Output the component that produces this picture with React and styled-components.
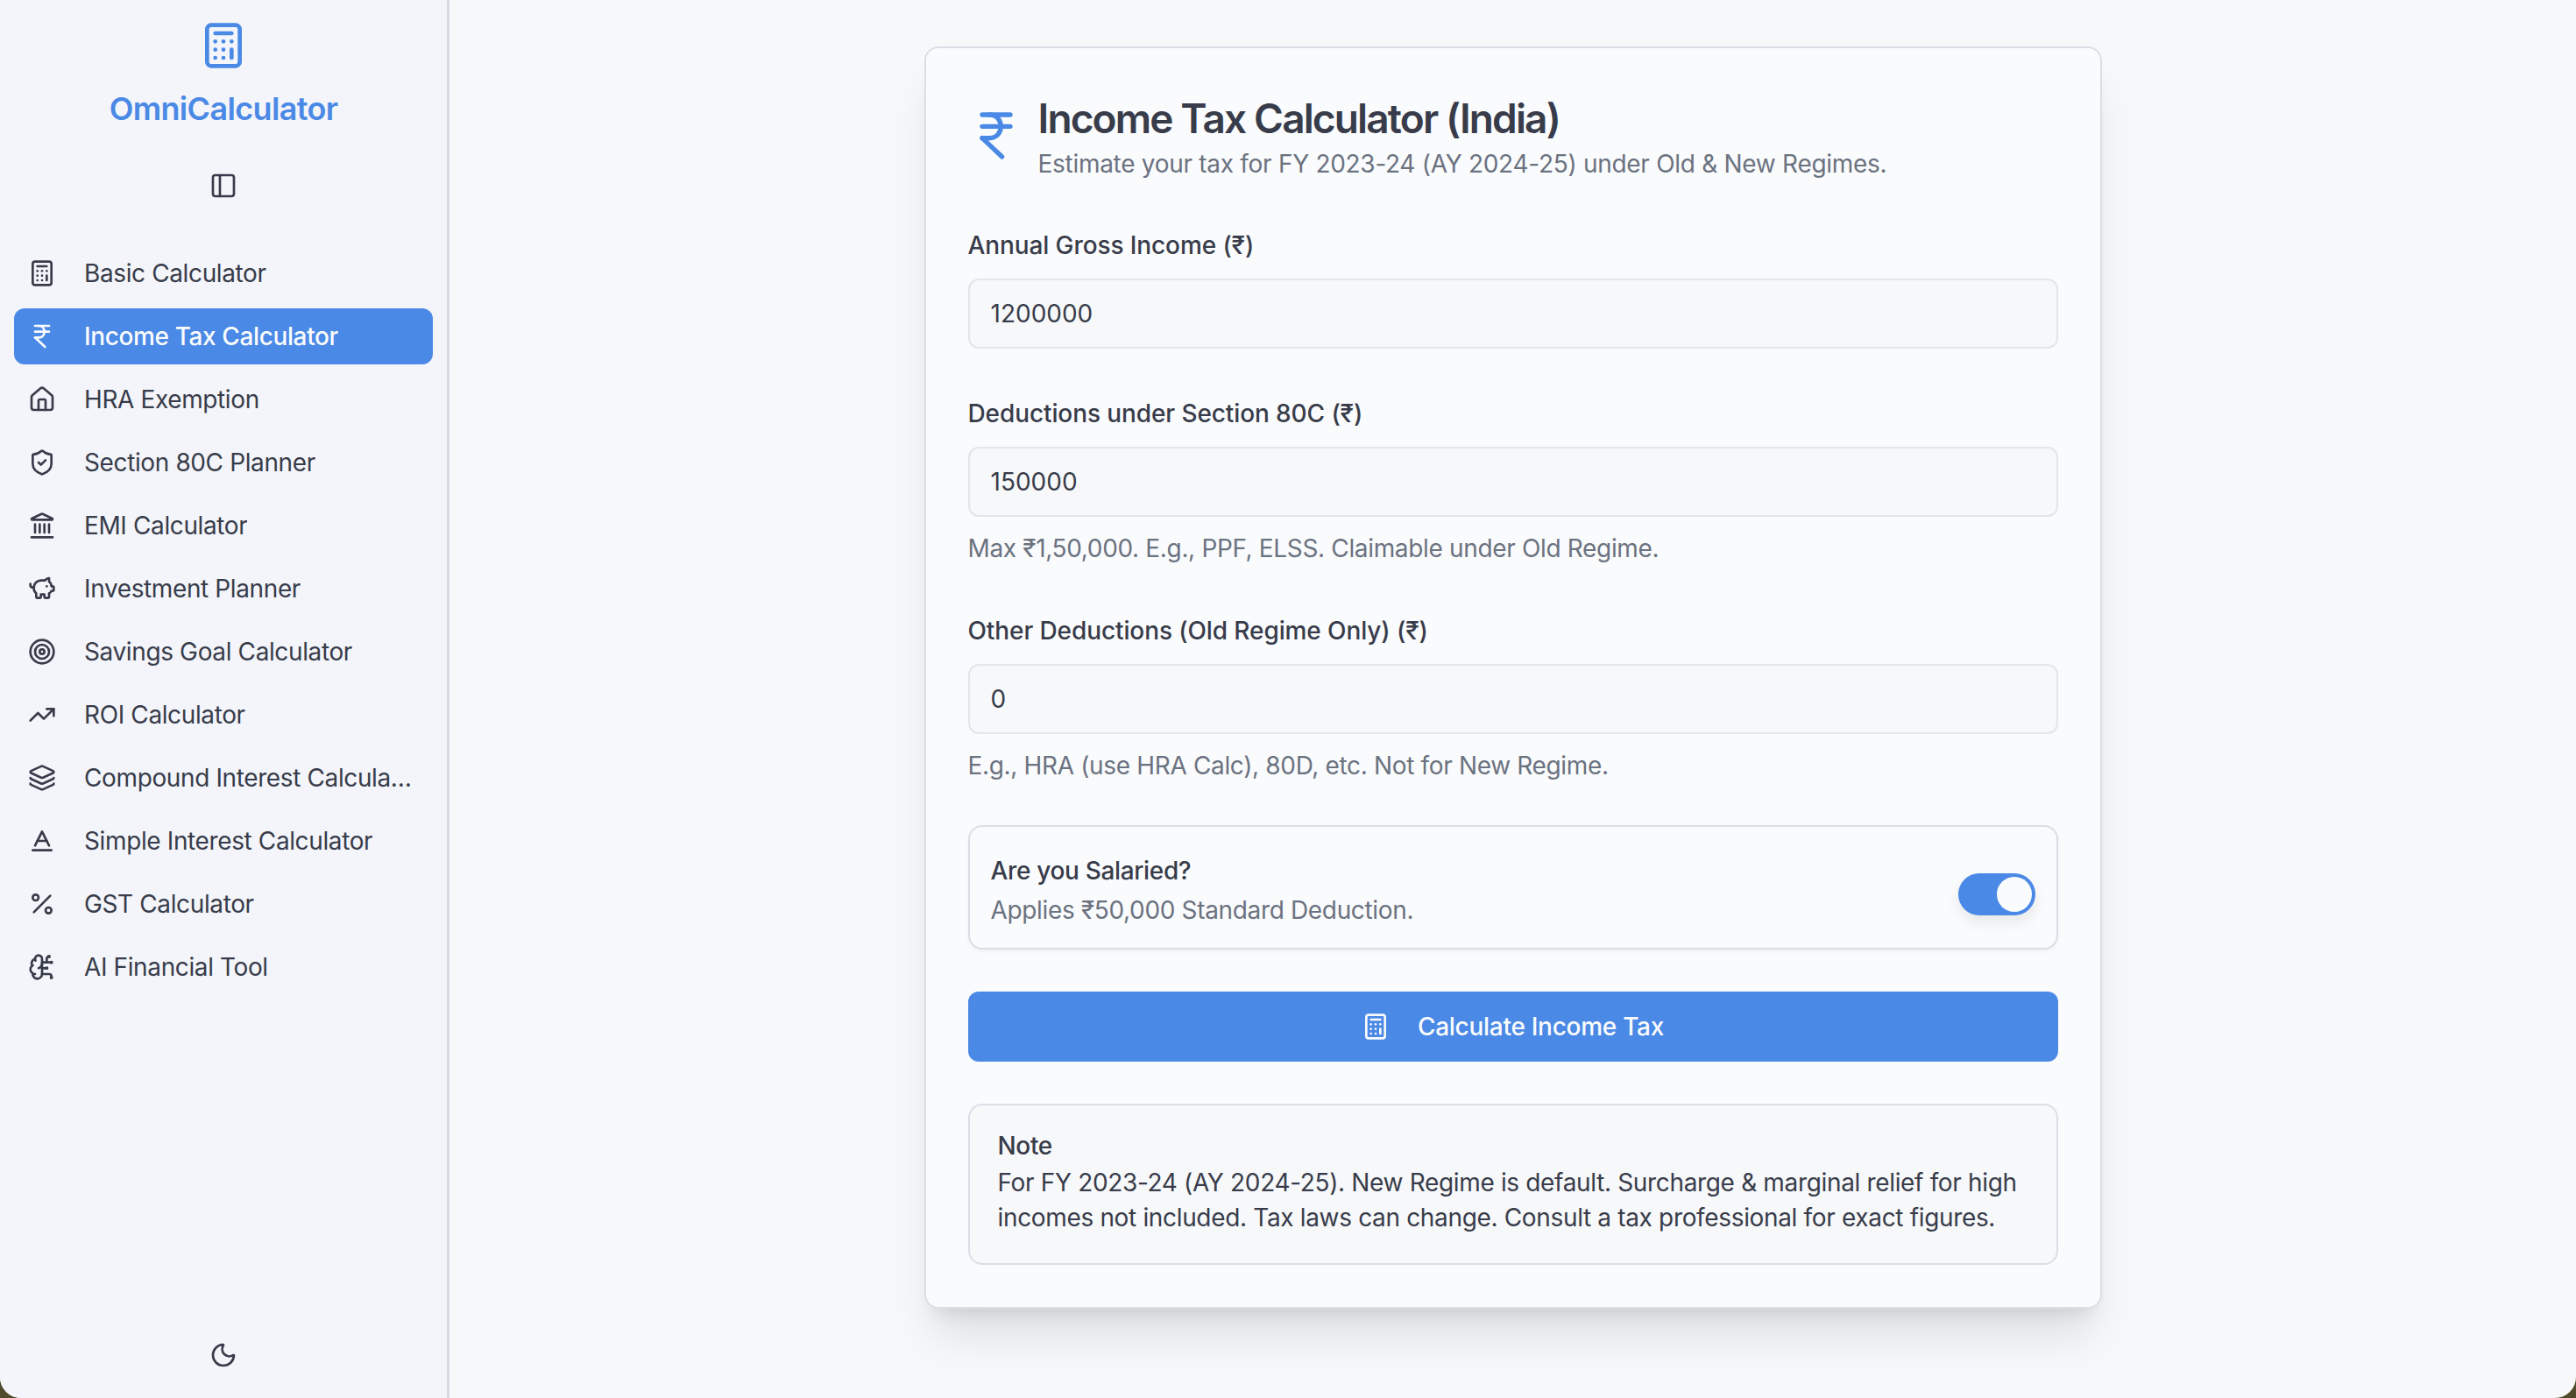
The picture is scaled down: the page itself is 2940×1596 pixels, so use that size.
import React from "react";
import styled, { createGlobalStyle } from "styled-components";
import {
  Baseline,
  BrainCircuit,
  Calculator,
  House,
  IndianRupee,
  Landmark,
  Layers,
  Moon,
  PanelLeft,
  Percent,
  PiggyBank,
  ShieldCheck,
  Target,
  TrendingUp,
} from "lucide-react";

const navItems = [
  { label: "Basic Calculator", icon: Calculator },
  { label: "Income Tax Calculator", icon: IndianRupee, active: true },
  { label: "HRA Exemption", icon: House },
  { label: "Section 80C Planner", icon: ShieldCheck },
  { label: "EMI Calculator", icon: Landmark },
  { label: "Investment Planner", icon: PiggyBank },
  { label: "Savings Goal Calculator", icon: Target },
  { label: "ROI Calculator", icon: TrendingUp },
  { label: "Compound Interest Calculator", icon: Layers },
  { label: "Simple Interest Calculator", icon: Baseline },
  { label: "GST Calculator", icon: Percent },
  { label: "AI Financial Tool", icon: BrainCircuit },
];

const GlobalStyle = createGlobalStyle`
  * {
    box-sizing: border-box;
  }
  body {
    margin: 0;
    background: #4f4a2a;
    font-family: Inter, "Liberation Sans", sans-serif;
    letter-spacing: -0.34px;
    color: #383c4a;
  }
`;

const Page = styled.div`
  display: flex;
  height: 1596px;
  overflow: hidden;
  border-radius: 0 0 24px 24px;
  background: #f7f8fa;
`;

const Sidebar = styled.aside`
  display: flex;
  flex-direction: column;
  flex: 0 0 513px;
  min-width: 0;
  padding: 24px 16px 33px;
  background: #f3f5fa;
  border-right: 3px solid #d9dbe4;
`;

const Brand = styled.div`
  display: flex;
  flex-direction: column;
  align-items: center;
  color: #4a89e5;
`;

const BrandName = styled.h1`
  margin: 20px 0 0;
  font-size: 36px;
  line-height: 48px;
  font-weight: 600;
  letter-spacing: -0.65px;
`;

const IconButton = styled.button`
  display: flex;
  align-self: center;
  padding: 0;
  border: 0;
  background: none;
  color: #383c4a;
`;

const CollapseButton = styled(IconButton)`
  margin: 48px 0 52px;
`;

const Nav = styled.nav`
  display: flex;
  flex-direction: column;
  gap: 8px;
  flex: 1;
  min-width: 0;
`;

const NavItem = styled.a`
  display: flex;
  align-items: center;
  gap: 32px;
  height: 64px;
  padding: 0 16px;
  border-radius: 12px;
  font-size: 28px;
  letter-spacing: -0.38px;
  font-weight: ${(p) => (p.$active ? 500 : 400)};
  background: ${(p) => (p.$active ? "#4a89e5" : "transparent")};
  color: ${(p) => (p.$active ? "#fafbfd" : "#383c4a")};

  svg {
    flex: none;
  }
`;

const NavLabel = styled.span`
  min-width: 0;
  overflow: hidden;
  white-space: nowrap;
  text-overflow: ellipsis;
`;

const Main = styled.main`
  flex: 1;
  min-width: 0;
  display: flex;
  justify-content: center;
  align-items: flex-start;
  padding-top: 53px;
`;

const Card = styled.section`
  width: 1344px;
  padding: 48px;
  background: #fafbfd;
  border: 2px solid #dcdee6;
  border-radius: 16px;
  box-shadow: 0 40px 50px -10px rgba(0, 0, 0, 0.1), 0 16px 20px -12px rgba(0, 0, 0, 0.1);
`;

const Header = styled.header`
  display: flex;
  align-items: center;
  gap: 16px;
  margin-bottom: 47px;
  color: #4a89e5;
`;

const Title = styled.h2`
  margin: 0;
  font-size: 46px;
  line-height: 64px;
  font-weight: 600;
  letter-spacing: -1.86px;
  color: #383c4a;
`;

const Subtitle = styled.p`
  margin: 0;
  font-size: 28px;
  line-height: 40px;
  letter-spacing: -0.29px;
  color: #6b7280;
`;

const Form = styled.form`
  display: flex;
  flex-direction: column;
  gap: 48px;
`;

const Field = styled.div`
  display: flex;
  flex-direction: column;
`;

const Label = styled.label`
  margin: 6px 0 18px;
  font-size: 28px;
  line-height: 40px;
  font-weight: 500;
  letter-spacing: -0.1px;
`;

const Input = styled.input`
  width: 100%;
  height: 80px;
  padding: 0 24px;
  background: #f7f8fa;
  border: 2px solid #e3e5eb;
  border-radius: 12px;
  font: inherit;
  font-size: 28px;
  color: #383c4a;
  outline: none;
`;

const Help = styled.p`
  margin: 16px 0 0;
  font-size: 28px;
  line-height: 40px;
  color: #6b7280;
`;

const SalariedBox = styled.div`
  display: flex;
  align-items: center;
  justify-content: space-between;
  height: 142px;
  padding: 0 24px;
  border: 2px solid #dcdee6;
  border-radius: 16px;
  box-shadow: 0 2px 4px rgba(0, 0, 0, 0.05);
`;

const SalariedText = styled.div`
  padding-top: 6px;
`;

const SalariedTitle = styled.div`
  font-size: 28px;
  line-height: 40px;
  font-weight: 500;
`;

const SalariedHint = styled.div`
  margin-top: 5px;
  font-size: 28px;
  line-height: 40px;
  color: #6b7280;
`;

const Switch = styled.button`
  display: flex;
  justify-content: ${(p) => (p.$on ? "flex-end" : "flex-start")};
  align-items: center;
  width: 88px;
  height: 48px;
  margin-top: 16px;
  padding: 0 4px;
  border: 0;
  border-radius: 24px;
  background: #4a89e5;
  box-shadow: 0 8px 16px rgba(0, 0, 0, 0.08);
`;

const Thumb = styled.span`
  width: 40px;
  height: 40px;
  border-radius: 50%;
  background: #fafbfd;
`;

const SubmitButton = styled.button`
  display: flex;
  align-items: center;
  justify-content: center;
  gap: 32px;
  height: 80px;
  border: 0;
  border-radius: 12px;
  background: #4a89e5;
  color: #fafbfd;
  font: inherit;
  font-size: 28px;
  font-weight: 500;
  letter-spacing: -0.28px;
`;

const Note = styled.div`
  padding: 32px;
  background: #f7f8fa;
  border: 2px solid #dcdee6;
  border-radius: 16px;
  font-size: 28px;
`;

const NoteTitle = styled.div`
  margin-bottom: 8px;
  line-height: 28px;
  font-weight: 500;
`;

const NoteText = styled.div`
  line-height: 40px;
`;

export default function App() {
  return (
    <>
      <GlobalStyle />
      <Page>
        <Sidebar>
          <Brand>
            <Calculator size={56} />
            <BrandName>OmniCalculator</BrandName>
          </Brand>
          <CollapseButton type="button">
            <PanelLeft size={32} />
          </CollapseButton>
          <Nav>
            {navItems.map(({ label, icon: Icon, active }) => (
              <NavItem key={label} $active={active}>
                <Icon size={32} />
                <NavLabel>{label}</NavLabel>
              </NavItem>
            ))}
          </Nav>
          <IconButton type="button">
            <Moon size={32} />
          </IconButton>
        </Sidebar>
        <Main>
          <Card>
            <Header>
              <IndianRupee size={64} />
              <div>
                <Title>Income Tax Calculator (India)</Title>
                <Subtitle>Estimate your tax for FY 2023-24 (AY 2024-25) under Old &amp; New Regimes.</Subtitle>
              </div>
            </Header>
            <Form>
              <Field>
                <Label>Annual Gross Income (₹)</Label>
                <Input readOnly value="1200000" />
              </Field>
              <Field>
                <Label>Deductions under Section 80C (₹)</Label>
                <Input readOnly value="150000" />
                <Help>Max ₹1,50,000. E.g., PPF, ELSS. Claimable under Old Regime.</Help>
              </Field>
              <Field>
                <Label>Other Deductions (Old Regime Only) (₹)</Label>
                <Input readOnly value="0" />
                <Help>E.g., HRA (use HRA Calc), 80D, etc. Not for New Regime.</Help>
              </Field>
              <SalariedBox>
                <SalariedText>
                  <SalariedTitle>Are you Salaried?</SalariedTitle>
                  <SalariedHint>Applies ₹50,000 Standard Deduction.</SalariedHint>
                </SalariedText>
                <Switch type="button" role="switch" aria-checked="true" $on>
                  <Thumb />
                </Switch>
              </SalariedBox>
              <SubmitButton type="button">
                <Calculator size={32} />
                Calculate Income Tax
              </SubmitButton>
              <Note>
                <NoteTitle>Note</NoteTitle>
                <NoteText>
                  For FY 2023-24 (AY 2024-25). New Regime is default. Surcharge &amp; marginal relief for high incomes not
                  included. Tax laws can change. Consult a tax professional for exact figures.
                </NoteText>
              </Note>
            </Form>
          </Card>
        </Main>
      </Page>
    </>
  );
}
